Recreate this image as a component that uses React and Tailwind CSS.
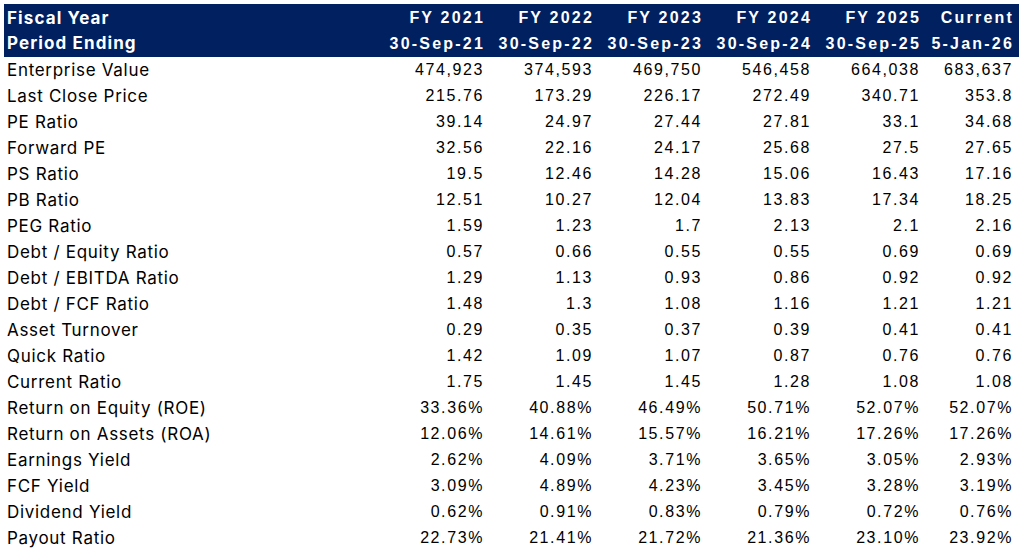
import React from "react";

const years = [
  { fy: "FY 2021", end: "30-Sep-21" },
  { fy: "FY 2022", end: "30-Sep-22" },
  { fy: "FY 2023", end: "30-Sep-23" },
  { fy: "FY 2024", end: "30-Sep-24" },
  { fy: "FY 2025", end: "30-Sep-25" },
  { fy: "Current", end: "5-Jan-26" },
];

const rows = [
  ["Enterprise Value", "474,923", "374,593", "469,750", "546,458", "664,038", "683,637"],
  ["Last Close Price", "215.76", "173.29", "226.17", "272.49", "340.71", "353.8"],
  ["PE Ratio", "39.14", "24.97", "27.44", "27.81", "33.1", "34.68"],
  ["Forward PE", "32.56", "22.16", "24.17", "25.68", "27.5", "27.65"],
  ["PS Ratio", "19.5", "12.46", "14.28", "15.06", "16.43", "17.16"],
  ["PB Ratio", "12.51", "10.27", "12.04", "13.83", "17.34", "18.25"],
  ["PEG Ratio", "1.59", "1.23", "1.7", "2.13", "2.1", "2.16"],
  ["Debt / Equity Ratio", "0.57", "0.66", "0.55", "0.55", "0.69", "0.69"],
  ["Debt / EBITDA Ratio", "1.29", "1.13", "0.93", "0.86", "0.92", "0.92"],
  ["Debt / FCF Ratio", "1.48", "1.3", "1.08", "1.16", "1.21", "1.21"],
  ["Asset Turnover", "0.29", "0.35", "0.37", "0.39", "0.41", "0.41"],
  ["Quick Ratio", "1.42", "1.09", "1.07", "0.87", "0.76", "0.76"],
  ["Current Ratio", "1.75", "1.45", "1.45", "1.28", "1.08", "1.08"],
  ["Return on Equity (ROE)", "33.36%", "40.88%", "46.49%", "50.71%", "52.07%", "52.07%"],
  ["Return on Assets (ROA)", "12.06%", "14.61%", "15.57%", "16.21%", "17.26%", "17.26%"],
  ["Earnings Yield", "2.62%", "4.09%", "3.71%", "3.65%", "3.05%", "2.93%"],
  ["FCF Yield", "3.09%", "4.89%", "4.23%", "3.45%", "3.28%", "3.19%"],
  ["Dividend Yield", "0.62%", "0.91%", "0.83%", "0.79%", "0.72%", "0.76%"],
  ["Payout Ratio", "22.73%", "21.41%", "21.72%", "21.36%", "23.10%", "23.92%"],
];

export default function App() {
  return (
    <div className="bg-white w-[1025px] h-[552px] overflow-hidden pt-[4px] pl-[4px]">
      <table className="table-fixed border-collapse w-[1015px] text-[16px] text-black">
        <colgroup>
          <col className="w-[373px]" />
          <col className="w-[109px]" />
          <col className="w-[109px]" />
          <col className="w-[109px]" />
          <col className="w-[109px]" />
          <col className="w-[109px]" />
          <col className="w-[97px]" />
        </colgroup>
        <thead className="bg-[#002060] text-white font-bold">
          <tr className="h-[26px]">
            <th className="text-left p-0 pl-[3px] pt-[2px] leading-none font-['Inter',sans-serif] text-[17px] tracking-[1.1px] font-bold">
              Fiscal Year
            </th>
            {years.map((y, i) => (
              <th
                key={y.fy}
                className={`text-right p-0 pt-[2px] leading-none font-['Liberation_Sans',Arial,sans-serif] tracking-[2.2px] ${i === 5 ? "pr-[5px]" : "pr-[1px]"}`}
              >
                {y.fy}
              </th>
            ))}
          </tr>
          <tr className="h-[27px]">
            <th className="text-left p-0 pl-[3px] leading-none font-['Inter',sans-serif] text-[17px] tracking-[1.1px] font-bold">
              Period Ending
            </th>
            {years.map((y, i) => (
              <th
                key={y.end}
                className={`text-right p-0 leading-none font-['Liberation_Sans',Arial,sans-serif] tracking-[2.2px] ${i === 5 ? "pr-[5px]" : "pr-[1px]"}`}
              >
                {y.end}
              </th>
            ))}
          </tr>
        </thead>
        <tbody>
          {rows.map((r) => (
            <tr key={r[0]} className="h-[26px]">
              <td className="p-0 pl-[3px] leading-none text-left font-['Inter',sans-serif] text-[17px] tracking-[0.7px]">
                {r[0]}
              </td>
              {r.slice(1).map((v, i) => (
                <td
                  key={i}
                  className={`p-0 leading-none text-right font-['Liberation_Sans',Arial,sans-serif] tracking-[1.6px] ${i === 5 ? "pr-[6px]" : "pr-[2px]"}`}
                >
                  {v}
                </td>
              ))}
            </tr>
          ))}
        </tbody>
      </table>
    </div>
  );
}
